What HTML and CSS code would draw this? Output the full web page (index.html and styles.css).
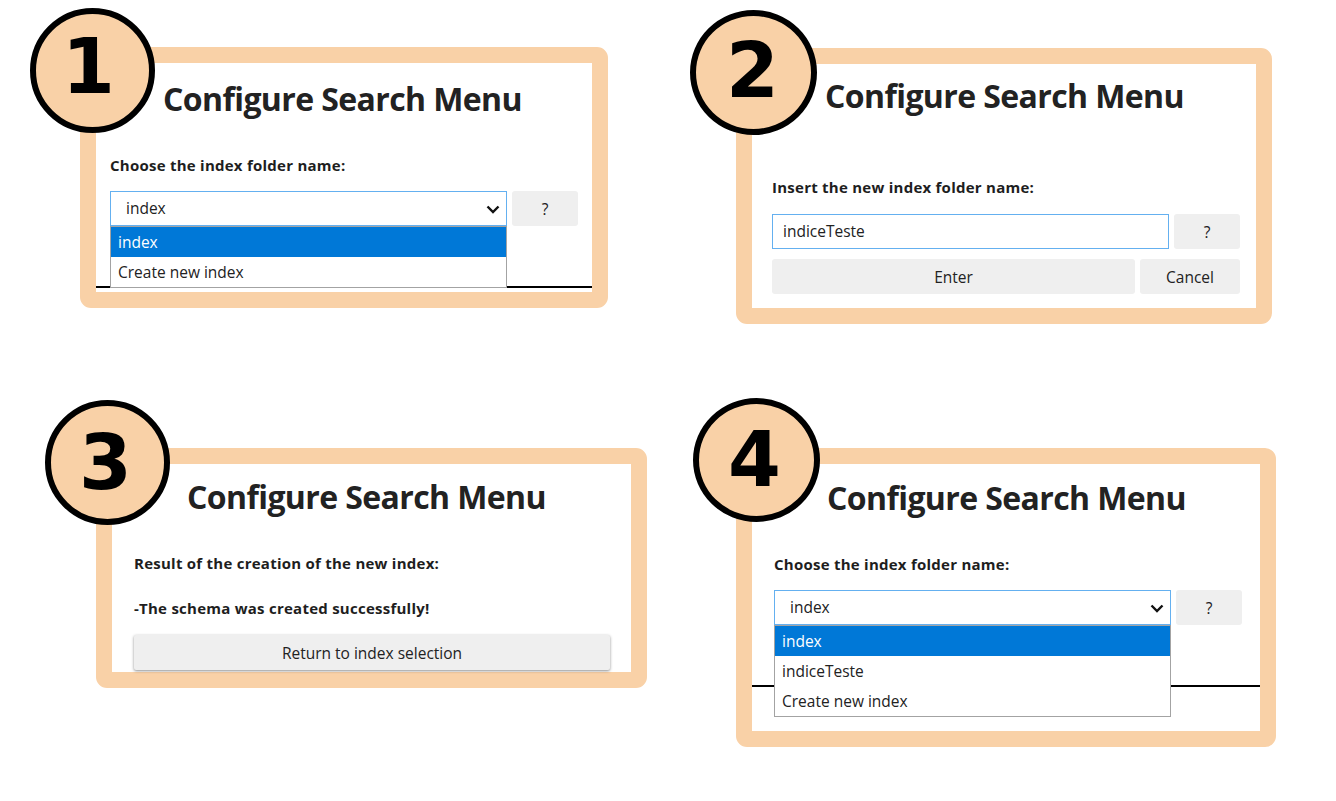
FILE: index.html
```html
<!DOCTYPE html>
<html lang="en">
<head>
<meta charset="utf-8">
<title>Configure Search Menu – steps</title>
<link rel="stylesheet" href="styles.css">
</head>
<body>
<main class="board">
  <section class="cell cell-1">
    <div class="panel panel-1">
      <div class="badge badge-1"><span>1</span></div>
      <h1 class="title">Configure Search Menu</h1>
      <p class="label">Choose the index folder name:</p>
      <div class="row">
        <div class="select">
          <span class="select-value">index</span>
          <svg class="chev" width="14" height="9" viewBox="0 0 14 9"><polyline points="1.5,1.5 7,7 12.5,1.5" fill="none" stroke="#111" stroke-width="2.4"/></svg>
          <ul class="options">
            <li class="opt sel">index</li>
            <li class="opt">Create new index</li>
          </ul>
        </div>
        <button class="btn help">?</button>
      </div>
      <div class="rule"></div>
    </div>
  </section>

  <section class="cell cell-2">
    <div class="panel panel-2">
      <div class="badge badge-2"><span>2</span></div>
      <h1 class="title">Configure Search Menu</h1>
      <p class="label">Insert the new index folder name:</p>
      <div class="row">
        <div class="input">indiceTeste</div>
        <button class="btn help">?</button>
      </div>
      <div class="row row-actions">
        <button class="btn enter">Enter</button>
        <button class="btn cancel">Cancel</button>
      </div>
    </div>
  </section>

  <section class="cell cell-3">
    <div class="panel panel-3">
      <div class="badge badge-3"><span>3</span></div>
      <h1 class="title">Configure Search Menu</h1>
      <p class="label">Result of the creation of the new index:</p>
      <p class="label label-result">-The schema was created successfully!</p>
      <button class="btn return">Return to index selection</button>
    </div>
  </section>

  <section class="cell cell-4">
    <div class="panel panel-4">
      <div class="badge badge-4"><span>4</span></div>
      <h1 class="title">Configure Search Menu</h1>
      <p class="label">Choose the index folder name:</p>
      <div class="row">
        <div class="select">
          <span class="select-value">index</span>
          <svg class="chev" width="14" height="9" viewBox="0 0 14 9"><polyline points="1.5,1.5 7,7 12.5,1.5" fill="none" stroke="#111" stroke-width="2.4"/></svg>
          <ul class="options">
            <li class="opt sel">index</li>
            <li class="opt">indiceTeste</li>
            <li class="opt">Create new index</li>
          </ul>
        </div>
        <button class="btn help">?</button>
      </div>
      <div class="rule"></div>
    </div>
  </section>
</main>
</body>
</html>
```

FILE: styles.css
```css
* { box-sizing: border-box; }

html, body {
  margin: 0;
  padding: 0;
  background: #ffffff;
}

body {
  width: 1336px;
  height: 801px;
  overflow: hidden;
  font-family: "Open Sans", "Noto Sans", sans-serif;
  color: #212121;
}

.board {
  display: grid;
  grid-template-columns: 656px 680px;
  grid-template-rows: 400px 401px;
}

.cell { position: relative; }
.cell-1 { padding: 47px 0 0 80px; }
.cell-2 { padding: 48px 0 0 80px; }
.cell-3 { padding: 48px 0 0 96px; }
.cell-4 { padding: 48px 0 0 80px; }

.panel {
  position: relative;
  background: #fff;
  border: 16px solid #f9d1a7;
  border-radius: 11px;
  display: flex;
  flex-direction: column;
}

.panel-1 { width: 528px; height: 261px; padding: 0 14px; }
.panel-2 { width: 536px; height: 276px; padding: 0 16px 0 20px; }
.panel-3 { width: 551px; height: 240px; padding: 0 21px 0 22px; }
.panel-4 { width: 540px; height: 299px; padding: 0 18px 0 22px; }

/* number badges */
.badge {
  position: absolute;
  width: 125px;
  height: 125px;
  border: 6px solid #000;
  border-radius: 50%;
  background: #f9d1a7;
  display: flex;
  align-items: center;
  justify-content: center;
  z-index: 3;
}
.badge span {
  font-family: "DejaVu Sans", sans-serif;
  font-weight: 700;
  font-size: 76px;
  line-height: 1;
  color: #000;
}
.badge-1 { left: -66px; top: -55px; }
.badge-1 span { margin: -8px 0 0 -8px; }
.badge-2 { left: -62px; top: -54px; width: 127px; }
.badge-2 span { margin: -4px 0 0 -2px; }
.badge-3 { left: -67px; top: -64px; }
.badge-3 span { margin: 0 0 0 -4px; }
.badge-4 { left: -59px; top: -66px; width: 127px; height: 124px; }
.badge-4 span { margin: 0 0 0 -4px; }

/* title */
.title {
  margin: 0;
  font-family: "Open Sans", "Noto Sans", sans-serif;
  font-weight: 700;
  font-size: 32px;
  line-height: 40px;
  letter-spacing: -0.6px;
  color: #222;
  white-space: nowrap;
}
.panel-1 .title { margin: 16px 0 0 53px; }
.panel-2 .title { margin: 12px 0 0 53px; }
.panel-3 .title { margin: 13px 0 0 53px; }
.panel-4 .title { margin: 14px 0 0 53px; }

.label {
  margin: 0;
  font-weight: 700;
  font-size: 15px;
  line-height: 20px;
  color: #1e1e1e;
  letter-spacing: 0.25px;
  white-space: nowrap;
}
.panel-1 .label { margin-top: 36px; }
.panel-2 .label { margin-top: 61px; }
.panel-3 .label { margin-top: 36px; }
.panel-3 .label-result { margin-top: 25px; }
.panel-4 .label { margin-top: 36px; }

.row {
  display: flex;
  gap: 5px;
  margin-top: 16px;
}
.panel-2 .row { margin-top: 17px; }
.panel-2 .row-actions { margin-top: 10px; }

.select, .input {
  position: relative;
  width: 397px;
  height: 35px;
  border: 1px solid #64b0f0;
  background: #fff;
  font-size: 15.5px;
  line-height: 33px;
  color: #222;
}
.select-value { padding-left: 15px; }
.input { padding-left: 10px; }

.chev {
  position: absolute;
  right: 6px;
  top: 13px;
}

.options {
  position: absolute;
  left: -1px;
  top: 34px;
  width: 397px;
  margin: 0;
  padding: 0;
  list-style: none;
  background: #fff;
  border: 1px solid #a3a3a3;
  z-index: 2;
}
.opt {
  height: 30px;
  line-height: 30px;
  padding-left: 7px;
  font-size: 15.5px;
  color: #222;
}
.opt.sel {
  background: #0078d7;
  color: #fff;
}

.btn {
  border: none;
  border-radius: 3px;
  background: #efefef;
  font-family: "Open Sans", "Noto Sans", sans-serif;
  font-size: 15.5px;
  color: #222;
  padding: 0;
  height: 35px;
}
.help { width: 66px; }
.enter { width: 363px; }
.cancel { width: 100px; }

.return {
  margin-top: 17px;
  width: 476px;
  height: 35px;
  box-shadow: 0 1px 3px rgba(0,0,0,0.45);
  border-radius: 2px;
}

.rule {
  position: absolute;
  left: 0;
  right: 0;
  height: 2px;
  background: #000;
}
.panel-1 .rule { top: 223px; }
.panel-4 .rule { top: 221px; }
```
